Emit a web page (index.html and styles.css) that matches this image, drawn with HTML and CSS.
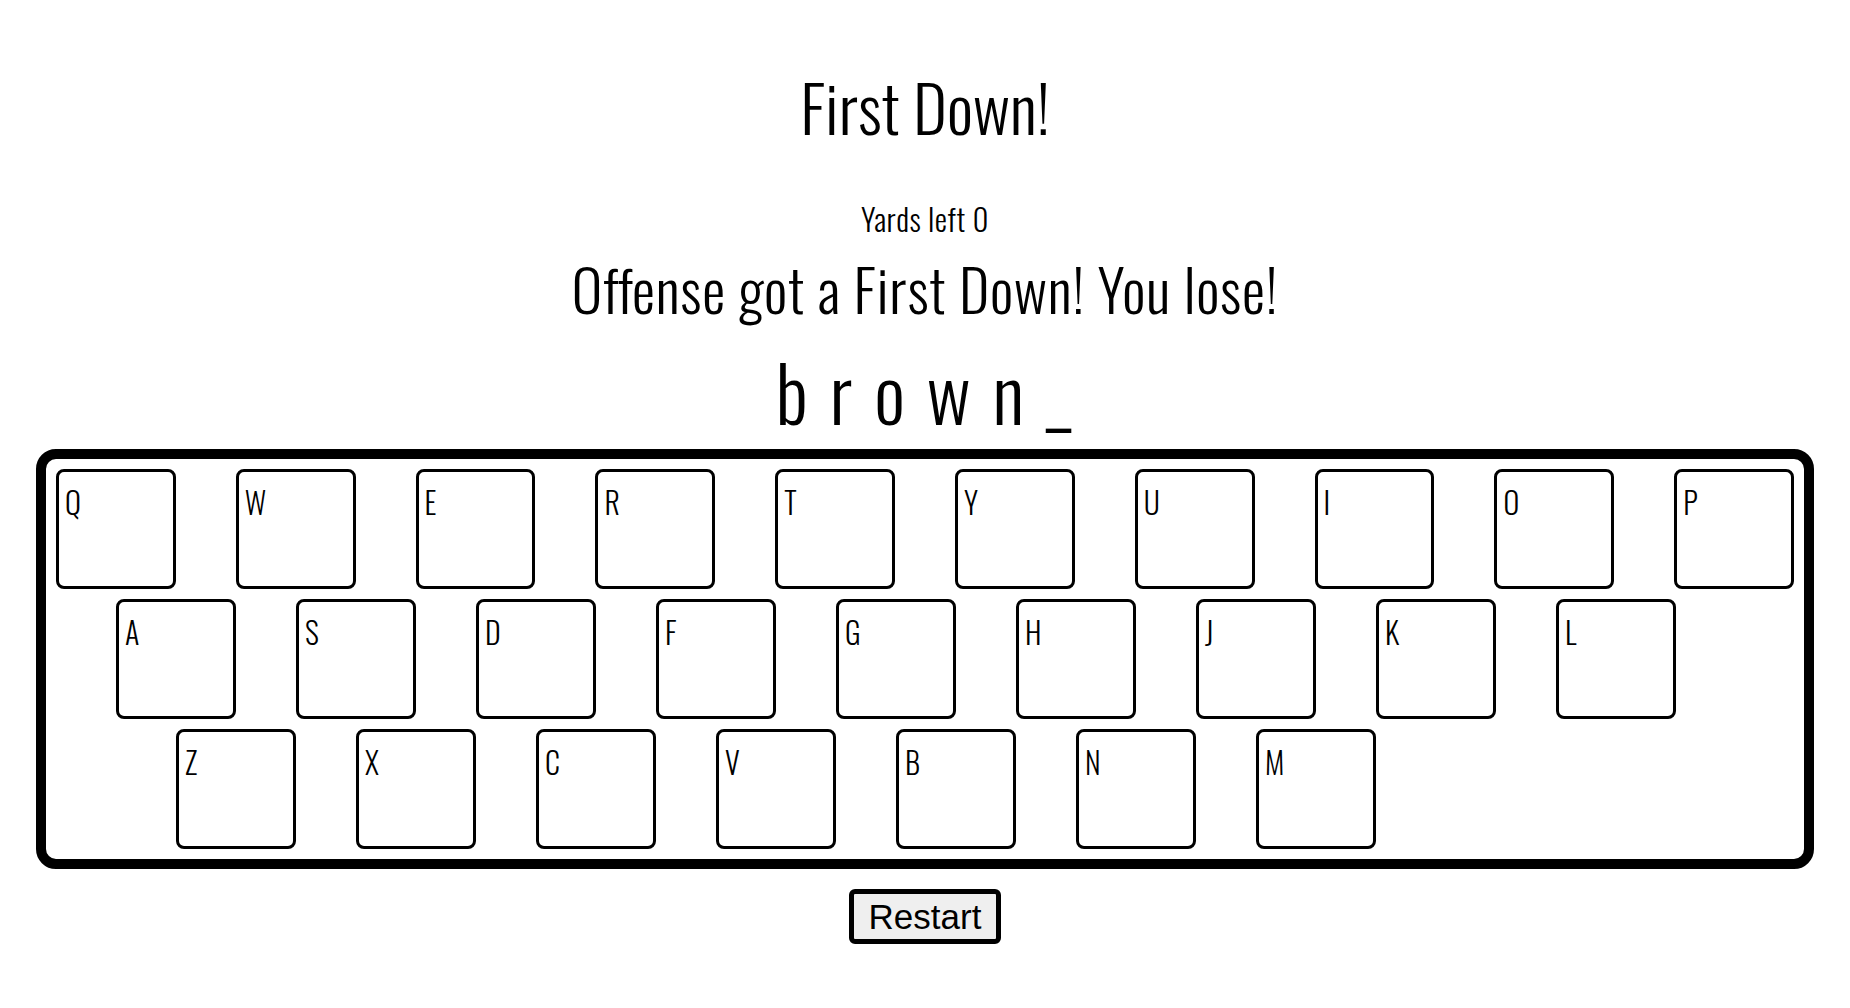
FILE: index.html
```html
<!DOCTYPE html>
<html lang="en">
<head>
<meta charset="utf-8">
<title>First Down!</title>
<link rel="stylesheet" href="styles.css">
</head>
<body>
<main class="game">
  <h1 class="title">First Down!</h1>
  <p class="yards">Yards left 0</p>
  <p class="status">Offense got a First Down! You lose!</p>
  <p class="word">b r o w n _</p>
  <div class="keyboard">
    <div class="row row-1">
      <div class="key">Q</div><div class="key">W</div><div class="key">E</div><div class="key">R</div><div class="key">T</div><div class="key">Y</div><div class="key">U</div><div class="key">I</div><div class="key">O</div><div class="key">P</div>
    </div>
    <div class="row row-2">
      <div class="key">A</div><div class="key">S</div><div class="key">D</div><div class="key">F</div><div class="key">G</div><div class="key">H</div><div class="key">J</div><div class="key">K</div><div class="key">L</div>
    </div>
    <div class="row row-3">
      <div class="key">Z</div><div class="key">X</div><div class="key">C</div><div class="key">V</div><div class="key">B</div><div class="key">N</div><div class="key">M</div>
    </div>
  </div>
  <div class="actions">
    <button class="restart" type="button">Restart</button>
  </div>
</main>
</body>
</html>
```
FILE: styles.css
```css
html, body {
  margin: 0;
  padding: 0;
  background: #ffffff;
}

body {
  font-family: "Oswald", "Open Sans", sans-serif;
  font-weight: 300;
  color: #000000;
}

.game {
  display: flex;
  flex-direction: column;
  align-items: center;
  text-align: center;
}

.title {
  margin: 73px 0 0;
  font-size: 65px;
  line-height: 1;
  font-weight: 300;
}

.yards {
  margin: 65px 0 0;
  font-size: 31px;
  line-height: 1;
  letter-spacing: 0.5px;
}

.status {
  margin: 25px 0 0;
  font-size: 58px;
  line-height: 1;
  letter-spacing: 0.8px;
}

.word {
  margin: 35px 0 0;
  font-size: 77px;
  line-height: 1;
  letter-spacing: 3px;
}

.keyboard {
  box-sizing: border-box;
  width: 1778px;
  margin-top: 20px;
  border: 10px solid #000000;
  border-radius: 20px;
  padding: 10px;
  display: flex;
  flex-direction: column;
  gap: 10px;
}

.row {
  display: flex;
  gap: 60px;
}

.row-2 { padding-left: 60px; }
.row-3 { padding-left: 120px; }

.key {
  box-sizing: border-box;
  width: 120px;
  height: 120px;
  border: 3px solid #000000;
  border-radius: 8px;
  padding: 15px 0 0 6px;
  font-size: 30px;
  line-height: 1;
  text-align: left;
  background: #ffffff;
}

.actions {
  margin-top: 20px;
}

.restart {
  box-sizing: border-box;
  width: 152px;
  height: 55px;
  border: 5px solid #000000;
  border-radius: 6px;
  background: #efefef;
  font-family: "Liberation Sans", Arial, sans-serif;
  font-size: 35px;
  font-weight: 400;
  color: #000000;
  padding: 0;
  line-height: 1;
}
```
